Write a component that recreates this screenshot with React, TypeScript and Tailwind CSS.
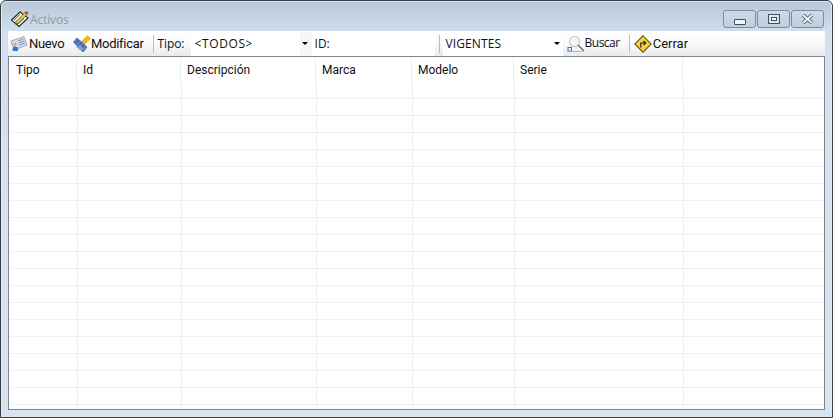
const cols = [
  { w: "w-[68px]", t: "Tipo", p: "pl-[7px]" },
  { w: "w-[104px]", t: "Id", p: "pl-[6px]" },
  { w: "w-[135px]", t: "Descripción", p: "pl-[6px]" },
  { w: "w-[96px]", t: "Marca", p: "pl-[6px]" },
  { w: "w-[102px]", t: "Modelo", p: "pl-[6px]" },
  { w: "w-[169px]", t: "Serie", p: "pl-[6px]" },
];
const rows = Array.from({ length: 19 });

function Sep({ className }: { className: string }) {
  return <div className={`w-px h-[18px] bg-[#b8bcc0] shrink-0 ${className}`} />;
}

function Arrow({ className }: { className: string }) {
  return <div className={`w-0 h-0 border-x-[3px] border-x-transparent border-t-[3px] border-t-black ${className}`} />;
}

function PencilIcon() {
  return (
    <svg width="20" height="20" viewBox="0 0 20 20" className="shrink-0">
      <path d="M1.5 11 L10 3 L18 9 L9 17.5 Z" fill="#fff" stroke="#222" strokeWidth="1.1" />
      <path d="M4 11 L10 5.5 M6 13 L12 7.5 M8 15 L14 9.5" stroke="#555" strokeWidth="1" />
      <path d="M6 12.5 L15 3.5 L17 5.5 L8 14.5 L5.5 15 Z" fill="#e3d23c" stroke="#4a4a10" strokeWidth="0.8" />
      <path d="M15 3.5 L16.5 2 L18.5 4 L17 5.5 Z" fill="#d22" />
    </svg>
  );
}

function NuevoIcon() {
  return (
    <svg width="18" height="18" viewBox="0 0 18 18" className="shrink-0">
      <path d="M1 6 L14 1.5 L17 10 L4 15 Z" fill="#d3dcec" stroke="#8b97ad" strokeWidth="0.8" />
      <path d="M8 6 L13.5 4 M8.7 8 L14.3 6 M9.3 10 L15 8" stroke="#7d8aa5" strokeWidth="0.9" />
      <circle cx="5" cy="9.5" r="1.7" fill="#e8a76a" />
      <path d="M2.5 15 Q2.5 11.5 5 11.5 Q8 11.5 8 14 L8 16 L3 16 Z" fill="#2d78d2" />
    </svg>
  );
}

function ModificarIcon() {
  return (
    <svg width="18" height="18" viewBox="0 0 18 18" className="shrink-0">
      <path d="M8 7 L14.5 0.5 L17.5 3.5 L11 10 Z" fill="#f0b91e" stroke="#c8981a" strokeWidth="0.5" />
      <path d="M0.5 7 L4 3 L14 12 L10 17 Z" fill="#5d80cc" stroke="#3c5a9e" strokeWidth="0.8" />
      <path d="M3 8 L5.5 5.2 M6 10.2 L8.5 7.6 M8.5 12.6 L11 10" stroke="#2f4a8a" strokeWidth="1" />
      <path d="M3.5 11 L7.5 15 M6 10.5 L10 15" stroke="#8fa6dc" strokeWidth="1.3" />
    </svg>
  );
}

function BuscarIcon() {
  return (
    <svg width="18" height="18" viewBox="0 0 18 18" className="shrink-0">
      <circle cx="7.5" cy="6.5" r="5" fill="#f4f5f6" stroke="#c6cacd" strokeWidth="1.2" />
      <path d="M11 10 L17 16" stroke="#777" strokeWidth="1.6" />
      <rect x="1" y="12.5" width="3.5" height="3.5" fill="#fff" stroke="#2e6fc4" strokeWidth="1" />
      <path d="M5 16.5 L16 16.5" stroke="#b5b5b5" strokeWidth="1" />
    </svg>
  );
}

function CerrarIcon() {
  return (
    <svg width="18" height="18" viewBox="0 0 18 18" className="shrink-0 -translate-x-[1px]">
      <path d="M9 0.8 L17.2 9 L9 17.2 L0.8 9 Z" fill="#f7d63a" stroke="#5e5618" strokeWidth="1.1" />
      <path d="M6.8 12.5 L6.8 8 L11 8 M9.5 6 L11.7 8 L9.5 10" fill="none" stroke="#222" strokeWidth="1.2" />
    </svg>
  );
}

const capBtn =
  "w-[33px] h-[18px] rounded-[3px] border border-[#7a8ba2] bg-gradient-to-b from-[#cfdae6] to-[#bfcddd] flex items-center justify-center";

export default function App() {
  return (
    <div className="w-[833px] h-[418px] overflow-hidden bg-white font-['Open_Sans','Noto_Sans',sans-serif] text-[12px] text-[#111]">
      <div className="w-full h-full flex flex-col rounded-t-[6px] border border-[#3c3f44] bg-gradient-to-b from-[#b8c8d8] via-[#d3e1ee] via-[8%] to-[#d8e5f1] px-[7px] pb-[7px] shadow-[inset_0_0_0_1px_#dfe8f0]">
        <div className="h-[30px] pt-[6px] shrink-0 flex items-center">
          <div className="ml-[2px] flex items-center">
            <PencilIcon />
            <span className="text-[#8f9ca8] mt-[1px] tracking-[-0.15px]">Activos</span>
          </div>
          <div className="ml-auto mr-[1px] flex gap-[1px]">
            <div className={capBtn}>
              <div className="w-[12px] h-[6px] mt-[5px] border border-[#44505e] bg-[#f2f5f8] rounded-[1px]" />
            </div>
            <div className={capBtn}>
              <div className="w-[12px] h-[10px] border border-[#44505e] bg-[#dfe7f0] flex items-center justify-center">
                <div className="w-[6px] h-[4px] border border-[#44505e] bg-white" />
              </div>
            </div>
            <div className={capBtn}>
              <svg width="13" height="10" viewBox="0 0 13 10">
                <path d="M2 1 L11 9 M11 1 L2 9" stroke="#44505e" strokeWidth="3.6" />
                <path d="M2 1 L11 9 M11 1 L2 9" stroke="#f4f6f8" strokeWidth="2" />
              </svg>
            </div>
          </div>
        </div>
        <div className="h-[25px] shrink-0 flex items-center bg-gradient-to-b from-white via-[#fafafa] to-[#eaeaea]">
          <div className="ml-[2px] flex items-center w-[56px] gap-[1px]">
            <NuevoIcon />
            <span className="font-['Roboto',sans-serif] text-[13px] tracking-[-0.3px]">Nuevo</span>
          </div>
          <div className="ml-[7px] flex items-center">
            <ModificarIcon />
            <span className="font-['Roboto',sans-serif] text-[13px] tracking-[-0.3px]">Modificar</span>
          </div>
          <Sep className="ml-[9px]" />
          <span className="ml-[4px] w-[32px] tracking-[-0.1px]">Tipo:</span>
          <div className="ml-[1px] w-[121px] h-[24px] bg-white flex items-center pl-[4px] justify-between">
            <span className="tracking-[0.6px]">&lt;TODOS&gt;</span>
            <div className="w-[12px] h-[24px] bg-[#f6f6f6] flex items-center justify-center mr-0">
              <Arrow className="mr-[1px]" />
            </div>
          </div>
          <div className="w-[123px] h-[24px] bg-white flex items-center pl-[3px]">
            <span>ID:</span>
          </div>
          <Sep className="ml-[4px]" />
          <div className="ml-[3px] w-[120px] h-[24px] bg-white flex items-center pl-[3px] pr-[3px] justify-between">
            <span className="tracking-[0.1px]">VIGENTES</span>
            <Arrow />
          </div>
          <div className="ml-[4px] flex items-center">
            <BuscarIcon />
            <span className="tracking-[-0.5px] -translate-y-[1px]">Buscar</span>
          </div>
          <Sep className="ml-[9px]" />
          <div className="ml-[5px] flex items-center">
            <CerrarIcon />
            <span className="font-['Roboto',sans-serif] text-[13px]">Cerrar</span>
          </div>
        </div>
        <div className="flex-1 min-h-0 border border-[#7f858c] bg-white flex flex-col">
          <div className="h-[25px] pt-[1px] shrink-0 flex font-['Roboto',sans-serif]">
            {cols.map((c) => (
              <div key={c.t} className={`${c.w} ${c.p} shrink-0 border-r border-[#ececec] pt-[3px]`}>
                {c.t}
              </div>
            ))}
          </div>
          {rows.map((_, i) => (
            <div key={i} className="h-[17px] shrink-0 flex ml-[1px] mr-[1px] border-b border-[#f0f0f0]">
              {cols.map((c) => (
                <div key={c.t} className={`${c.w} shrink-0 border-r border-[#f0f0f0]`} />
              ))}
            </div>
          ))}
          <div className="flex-1 min-h-0 flex ml-[1px]">
            {cols.map((c) => (
              <div key={c.t} className={`${c.w} shrink-0 border-r border-[#f0f0f0]`} />
            ))}
          </div>
        </div>
      </div>
    </div>
  );
}
